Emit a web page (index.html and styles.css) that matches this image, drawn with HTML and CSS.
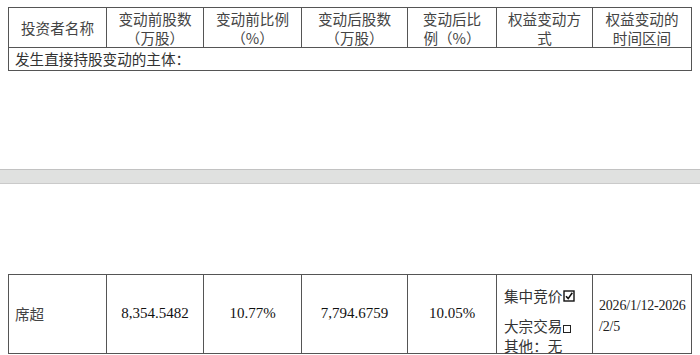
FILE: index.html
```html
<!DOCTYPE html>
<html lang="zh-CN">
<head>
<meta charset="utf-8">
<link rel="stylesheet" href="styles.css">
</head>
<body>
<section class="sheet sheet-top">
  <div class="grid">
    <div class="cell head">投资者名称</div>
    <div class="cell head">变动前股数<br>（万股）</div>
    <div class="cell head">变动前比例<br>（%）</div>
    <div class="cell head">变动后股数<br>（万股）</div>
    <div class="cell head">变动后比<br>例（%）</div>
    <div class="cell head">权益变动方<br>式</div>
    <div class="cell head">权益变动的<br>时间区间</div>
    <div class="cell sub">发生直接持股变动的主体：</div>
  </div>
</section>
<div class="pagebreak"></div>
<section class="sheet sheet-bottom">
  <div class="grid">
    <div class="cell data name">席超</div>
    <div class="cell data num">8,354.5482</div>
    <div class="cell data num">10.77%</div>
    <div class="cell data num">7,794.6759</div>
    <div class="cell data num">10.05%</div>
    <div class="cell data mode">
      <div class="opt first">集中竞价<svg class="chk" viewBox="0 0 12 12" width="12" height="12"><rect x="1" y="1" width="10" height="10" fill="none" stroke="#111" stroke-width="1.4"/><path d="M3 6.2 L5.2 8.6 L9.3 2.8" fill="none" stroke="#111" stroke-width="1.6"/></svg></div>
      <div class="opt">大宗交易<span class="box"></span></div>
      <div class="opt">其他：无</div>
    </div>
    <div class="cell data date">2026/1/12-2026<br>/2/5</div>
  </div>
</section>
</body>
</html>
```
FILE: styles.css
```css
html, body {
  margin: 0;
  padding: 0;
  background: #fff;
}
body {
  width: 700px;
  height: 355px;
  overflow: hidden;
  font-family: "Noto Sans CJK SC", "Liberation Serif", sans-serif;
  color: #333;
}
.sheet {
  padding-left: 8px;
}
.sheet-top {
  height: 169px;
  padding-top: 7px;
  box-sizing: border-box;
}
.sheet-bottom {
  padding-top: 90px;
}
.pagebreak {
  height: 13px;
  background: #e0e1e0;
  border-top: 1px solid #c2c2c2;
  border-bottom: 1px solid #cacaca;
}
.grid {
  display: grid;
  grid-template-columns: 98px 97px 98px 106px 89px 96px 99px;
  width: 684px;
  box-sizing: border-box;
  border-top: 1px solid #555;
  border-left: 1px solid #555;
}
.cell {
  box-sizing: border-box;
  border-right: 1px solid #555;
  border-bottom: 1px solid #555;
  font-size: 14.6px;
  min-width: 0;
}
.head {
  height: 40px;
  display: flex;
  align-items: center;
  justify-content: center;
  text-align: center;
  line-height: 19px;
  color: #444;
}
.sub {
  grid-column: 1 / -1;
  height: 23px;
  line-height: 22px;
  padding-left: 6px;
  color: #333;
}
.data {
  height: 79px;
  display: flex;
  align-items: center;
  padding-bottom: 1px;
}
.name {
  padding-left: 6px;
  color: #444;
}
.num {
  justify-content: center;
  font-family: "Liberation Serif", serif;
  font-size: 15px;
  color: #111;
}
.mode {
  flex-direction: column;
  align-items: flex-start;
  justify-content: flex-start;
  padding: 11px 0 0 7px;
  line-height: 20px;
  color: #333;
  overflow: visible;
}
.opt {
  display: flex;
  align-items: center;
  white-space: nowrap;
  flex: none;
}
.opt.first {
  margin-bottom: 10px;
}
.chk {
  margin-left: 1px;
}
.box {
  display: inline-block;
  width: 6px;
  height: 6px;
  border: 1px solid #222;
  margin-left: 1px;
  margin-top: 5px;
}
.date {
  display: block;
  padding: 20px 0 0 6px;
  font-family: "Liberation Serif", serif;
  font-size: 14px;
  line-height: 21px;
  color: #222;
  letter-spacing: -0.2px;
}
```
